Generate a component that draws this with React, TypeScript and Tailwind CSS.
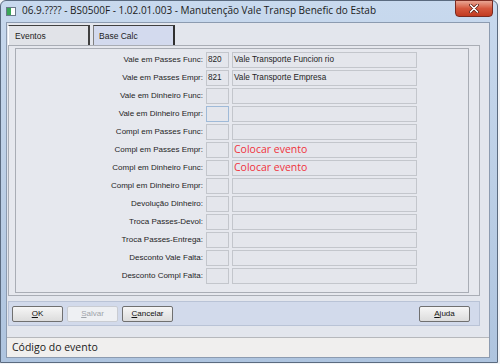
import React from "react";

const rows: { label: string; code: string; desc: string; red?: boolean; focus?: boolean }[] = [
  { label: "Vale em Passes Func:", code: "820", desc: "Vale Transporte Funcion rio" },
  { label: "Vale em Passes Empr:", code: "821", desc: "Vale Transporte Empresa" },
  { label: "Vale em Dinheiro Func:", code: "", desc: "" },
  { label: "Vale em Dinheiro Empr:", code: "", desc: "", focus: true },
  { label: "Compl em Passes Func:", code: "", desc: "" },
  { label: "Compl em Passes Empr:", code: "", desc: "Colocar evento", red: true },
  { label: "Compl em Dinheiro Func:", code: "", desc: "Colocar evento", red: true },
  { label: "Compl em Dinheiro Empr:", code: "", desc: "" },
  { label: "Devolução Dinheiro:", code: "", desc: "" },
  { label: "Troca Passes-Devol:", code: "", desc: "" },
  { label: "Troca Passes-Entrega:", code: "", desc: "" },
  { label: "Desconto Vale Falta:", code: "", desc: "" },
  { label: "Desconto Compl Falta:", code: "", desc: "" },
];

function Btn({ first, rest, disabled }: { first: string; rest: string; disabled?: boolean }) {
  return (
    <div
      className={`w-[51px] h-[16px] flex items-center justify-center rounded-[2px] border text-[8px] ${
        disabled
          ? "border-[#c9ccd2] bg-[#eef0f3] text-[#a0a4aa]"
          : "border-[#707070] bg-gradient-to-b from-[#f6f6f6] to-[#dcdcdc] text-[#111]"
      }`}
    >
      <span className="underline">{first}</span>
      <span>{rest}</span>
    </div>
  );
}

export default function App() {
  return (
    <div
      className="w-[500px] h-[364px] bg-[#f2f4f7] overflow-hidden"
      style={{ fontFamily: '"Liberation Sans", Arial, sans-serif' }}
    >
      <div className="w-[498px] h-[363px] border border-[#5b6b80] rounded-t-[6px] bg-gradient-to-b from-[#c8d9ee] via-[#bccfe6] to-[#aec4df] flex flex-col">
        {/* title bar */}
        <div className="h-[21px] flex items-start relative">
          <div className="mt-[6px] ml-[5px] w-[10px] h-[9px] border border-[#6a7a8a] bg-white flex">
            <div className="w-[4px] h-full bg-[#3aa657]" />
          </div>
          <div className="ml-[6px] mt-[2px] text-[10px] text-[#1b1b1b] whitespace-nowrap" style={{ fontFamily: '"Open Sans", "Liberation Sans", sans-serif' }}>
            06.9.???? - BS0500F - 1.02.01.003 - Manutenção Vale Transp Benefic do Estab
          </div>
          <div className="absolute left-[454px] top-[-1px] w-[38px] h-[17px] rounded-b-[4px] border border-[#7a2a20] bg-gradient-to-b from-[#e8a593] via-[#d4573d] to-[#c23a20] flex items-center justify-center">
            <svg width="10" height="9" viewBox="0 0 10 9">
              <path d="M1.5 1 L8.5 8 M8.5 1 L1.5 8" stroke="#5a1a10" strokeWidth="3" strokeLinecap="round" />
              <path d="M1.5 1 L8.5 8 M8.5 1 L1.5 8" stroke="#ffffff" strokeWidth="1.6" strokeLinecap="round" />
            </svg>
          </div>
        </div>
        {/* client */}
        <div className="ml-[5px] w-[484px] h-[336px] border border-[#8c9bb0] bg-[#e3e6ed] flex flex-col">
          {/* tabs */}
          <div className="h-[22px] pt-[2px] pl-[1px] flex gap-[3px]">
            <div className="w-[82px] h-[20px] border-t border-r-2 border-l border-t-[#404040] border-r-[#404040] border-l-[#ffffff] bg-[#e1e3e8] text-[8.5px] text-[#222] pl-[6px] pt-[4px]">
              Eventos
            </div>
            <div className="w-[82px] h-[20px] border-t border-l border-r-2 border-t-[#404040] border-l-[#808080] border-r-[#303030] bg-[#d3daee] text-[8.5px] text-[#222] pl-[5px] pt-[4px]">
              Base Calc
            </div>
          </div>
          {/* tab page */}
          <div className="ml-[1px] w-[472px] h-[251px] border border-[#a9adb5] bg-[#e6e8ee] pl-[6px] pt-[2px] pr-[10px] pb-[2px]">
            <div className="w-full h-full border border-[#a9adb5] pt-[3px] flex flex-col gap-[2px]">
              {rows.map((r, i) => (
                <div key={i} className="flex items-center h-[16px]">
                  <div className="w-[187px] text-right text-[8px] text-[#1e1e1e] whitespace-nowrap">{r.label}</div>
                  <div
                    className={`ml-[3px] w-[23px] h-[16px] border bg-[#e4e6ec] text-[8.2px] text-[#1e1e1e] pl-[1px] flex items-center ${
                      r.focus ? "border-[#9fbad8]" : "border-[#c3c6cc]"
                    }`}
                  >
                    {r.code}
                  </div>
                  <div
                    className={`ml-[3px] w-[185px] h-[16px] border border-[#c3c6cc] bg-[#e4e6ec] pl-[1px] flex items-center whitespace-nowrap ${
                      r.red ? "text-[10.5px] text-[#f0323c]" : "text-[8.2px] text-[#1e1e1e]"
                    }`}
                    style={r.red ? { fontFamily: '"Open Sans", "Liberation Sans", sans-serif' } : undefined}
                  >
                    {r.desc}
                  </div>
                </div>
              ))}
            </div>
          </div>
          {/* button band */}
          <div className="mt-[5px] ml-[1px] w-[472px] h-[25px] border border-[#b9c3d6] bg-[#d2daeb] flex items-center px-[3px]">
            <div className="flex gap-[4px]">
              <Btn first="O" rest="K" />
              <Btn first="S" rest="alvar" disabled />
              <Btn first="C" rest="ancelar" />
            </div>
            <div className="ml-auto mr-[6px]">
              <Btn first="A" rest="juda" />
            </div>
          </div>
          <div className="h-[11px]" />
          {/* status */}
          <div className="flex-1 border-t border-[#b6b8bc] bg-[#f0efee] flex items-center pl-[5px] text-[10.5px] text-[#1a1a1a]" style={{ fontFamily: '"Open Sans", "Liberation Sans", sans-serif' }}>
            Código do evento
          </div>
        </div>
      </div>
    </div>
  );
}
